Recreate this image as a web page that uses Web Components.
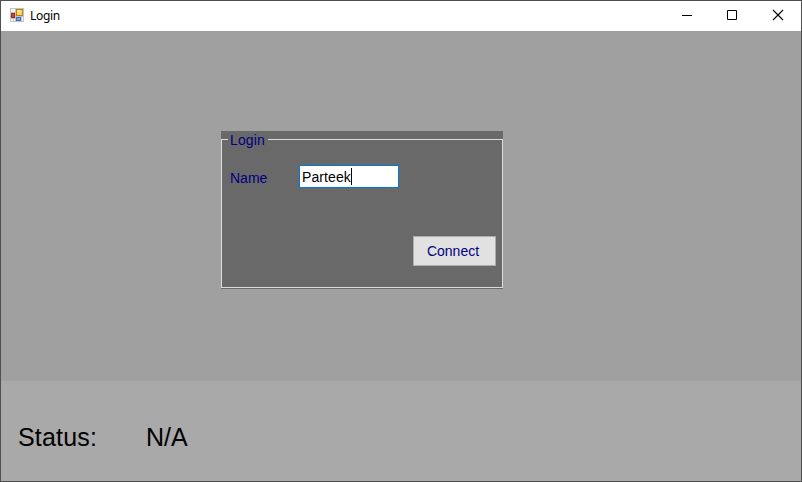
<!DOCTYPE html>
<html lang="en">
<head>
<meta charset="utf-8">
<title>Login</title>
<style>
html,body{margin:0;height:100%;overflow:hidden}
</style>
</head>
<body>
<app-window>
  <title-bar slot="title">Login</title-bar>
  <group-box>
    <span slot="legend">Login</span>
    <field-row><span slot="label">Name</span><text-box>Parteek</text-box></field-row>
    <push-button slot="action">Connect</push-button>
  </group-box>
  <status-panel slot="footer">Status:<span slot="value">N/A</span></status-panel>
</app-window>
<script>
function define(name, markup) {
  customElements.define(name, class extends HTMLElement {
    constructor() {
      super();
      this.attachShadow({mode: 'open'}).innerHTML = markup;
    }
  });
}

define('app-window', `<style>
:host{box-sizing:border-box;width:802px;height:482px;border:1px solid #505050;display:grid;grid-template-rows:30px 350px 100px;background:#a0a0a0;font-family:"Liberation Sans",Arial,sans-serif;color:#000}
main{padding:100px 0 0 220px}
</style><slot name="title"></slot><main><slot></slot></main><slot name="footer"></slot>`);

define('title-bar', `<style>
:host{display:flex;align-items:center;background:#fff;font:12px/16px "Noto Sans","Open Sans",sans-serif;letter-spacing:-.3px}
.icon{margin:0 6px 2px 9px;flex:none}
.name{flex:1}
.controls{display:flex}
.controls svg{display:block;margin-bottom:2px}
</style>
<svg class="icon" width="14" height="14" viewBox="0 0 14 14" shape-rendering="crispEdges">
<path fill="#c4c4c4" d="M0 0h14v14H0z"/><path fill="#f5f5f5" d="M1 1h4v3H1zM1 11h2v2H1zM4 11h1v2H4zM12 9h1v4h-1z"/>
<path fill="#b88413" d="M6 1h7v7H6z"/><path fill="#ffd45c" d="M7 2h5v5H7z"/><path fill="#ffe79e" d="M7 2h3v2H7z"/>
<path fill="#96271e" d="M1 5h4v5H1z"/><path fill="#d2493c" d="M2 6h2v3H2z"/>
<path fill="#3f70c8" d="M6 9h5v4H6z"/><path fill="#78a8f0" d="M7 10h3v2H7z"/>
</svg><span class="name"><slot></slot></span>
<div class="controls">
<svg width="46" height="28" viewBox="0 0 46 28"><path fill="#000" d="M19 14h10v1H19z"/></svg>
<svg width="46" height="28" viewBox="0 0 46 28"><path fill="none" stroke="#000" d="M18.5 9.5h9v9h-9z"/></svg>
<svg width="46" height="28" viewBox="0 0 46 28"><path fill="none" stroke="#000" stroke-width="1.1" d="M18 9l10 10M28 9L18 19"/></svg>
</div>`);

define('group-box', `<style>
:host{box-sizing:border-box;display:grid;grid-template-rows:18px 39px 1fr;width:282px;height:158px;background:#696969;border-bottom:1px solid #696969;color:#000080;font-size:14px;line-height:18px}
header{display:flex;align-items:flex-start}
header i{height:10px;margin-top:8px;border-top:1px solid #dcdcdc;box-sizing:border-box}
header i:first-child{width:7px;border-left:1px solid #dcdcdc}
header i:last-child{flex:1;border-right:1px solid #dcdcdc}
.legend{width:40px;box-sizing:border-box;padding-left:2px;white-space:nowrap;letter-spacing:.15px}
.body,.foot{border:solid #dcdcdc;border-width:0 1px}
.foot{display:flex;justify-content:flex-end;align-items:flex-start;padding:48px 6px 0 0;border-bottom-width:1px}
.body{padding:16px 0 0 8px}
</style><header><i></i><span class="legend"><slot name="legend"></slot></span><i></i></header>
<div class="body"><slot></slot></div><div class="foot"><slot name="action"></slot></div>`);

define('field-row', `<style>
:host{display:grid;grid-template-columns:69px 100px;align-items:start}
.label{padding-top:4px}
</style><span class="label"><slot name="label"></slot></span><slot></slot>`);

define('text-box', `<style>
:host{box-sizing:border-box;display:flex;align-items:center;height:23px;border:1px solid #0078d7;background:#fff;color:#000;padding-left:2px;letter-spacing:.1px}
i{width:1px;height:17px;background:#000}
</style><slot></slot><i></i>`);

define('push-button', `<style>
:host{box-sizing:border-box;display:flex;align-items:center;justify-content:center;width:83px;height:30px;background:#e1e1e1;border:1px solid #adadad;padding-right:3px}
</style><slot></slot>`);

define('status-panel', `<style>
:host{box-sizing:border-box;display:grid;grid-template-columns:128px 1fr;align-items:start;background:#a9a9a9;padding:41px 0 0 17px;font-size:25px;line-height:30px}
.label{letter-spacing:.2px}
</style><span class="label"><slot></slot></span><slot name="value"></slot>`);
</script>
</body>
</html>
